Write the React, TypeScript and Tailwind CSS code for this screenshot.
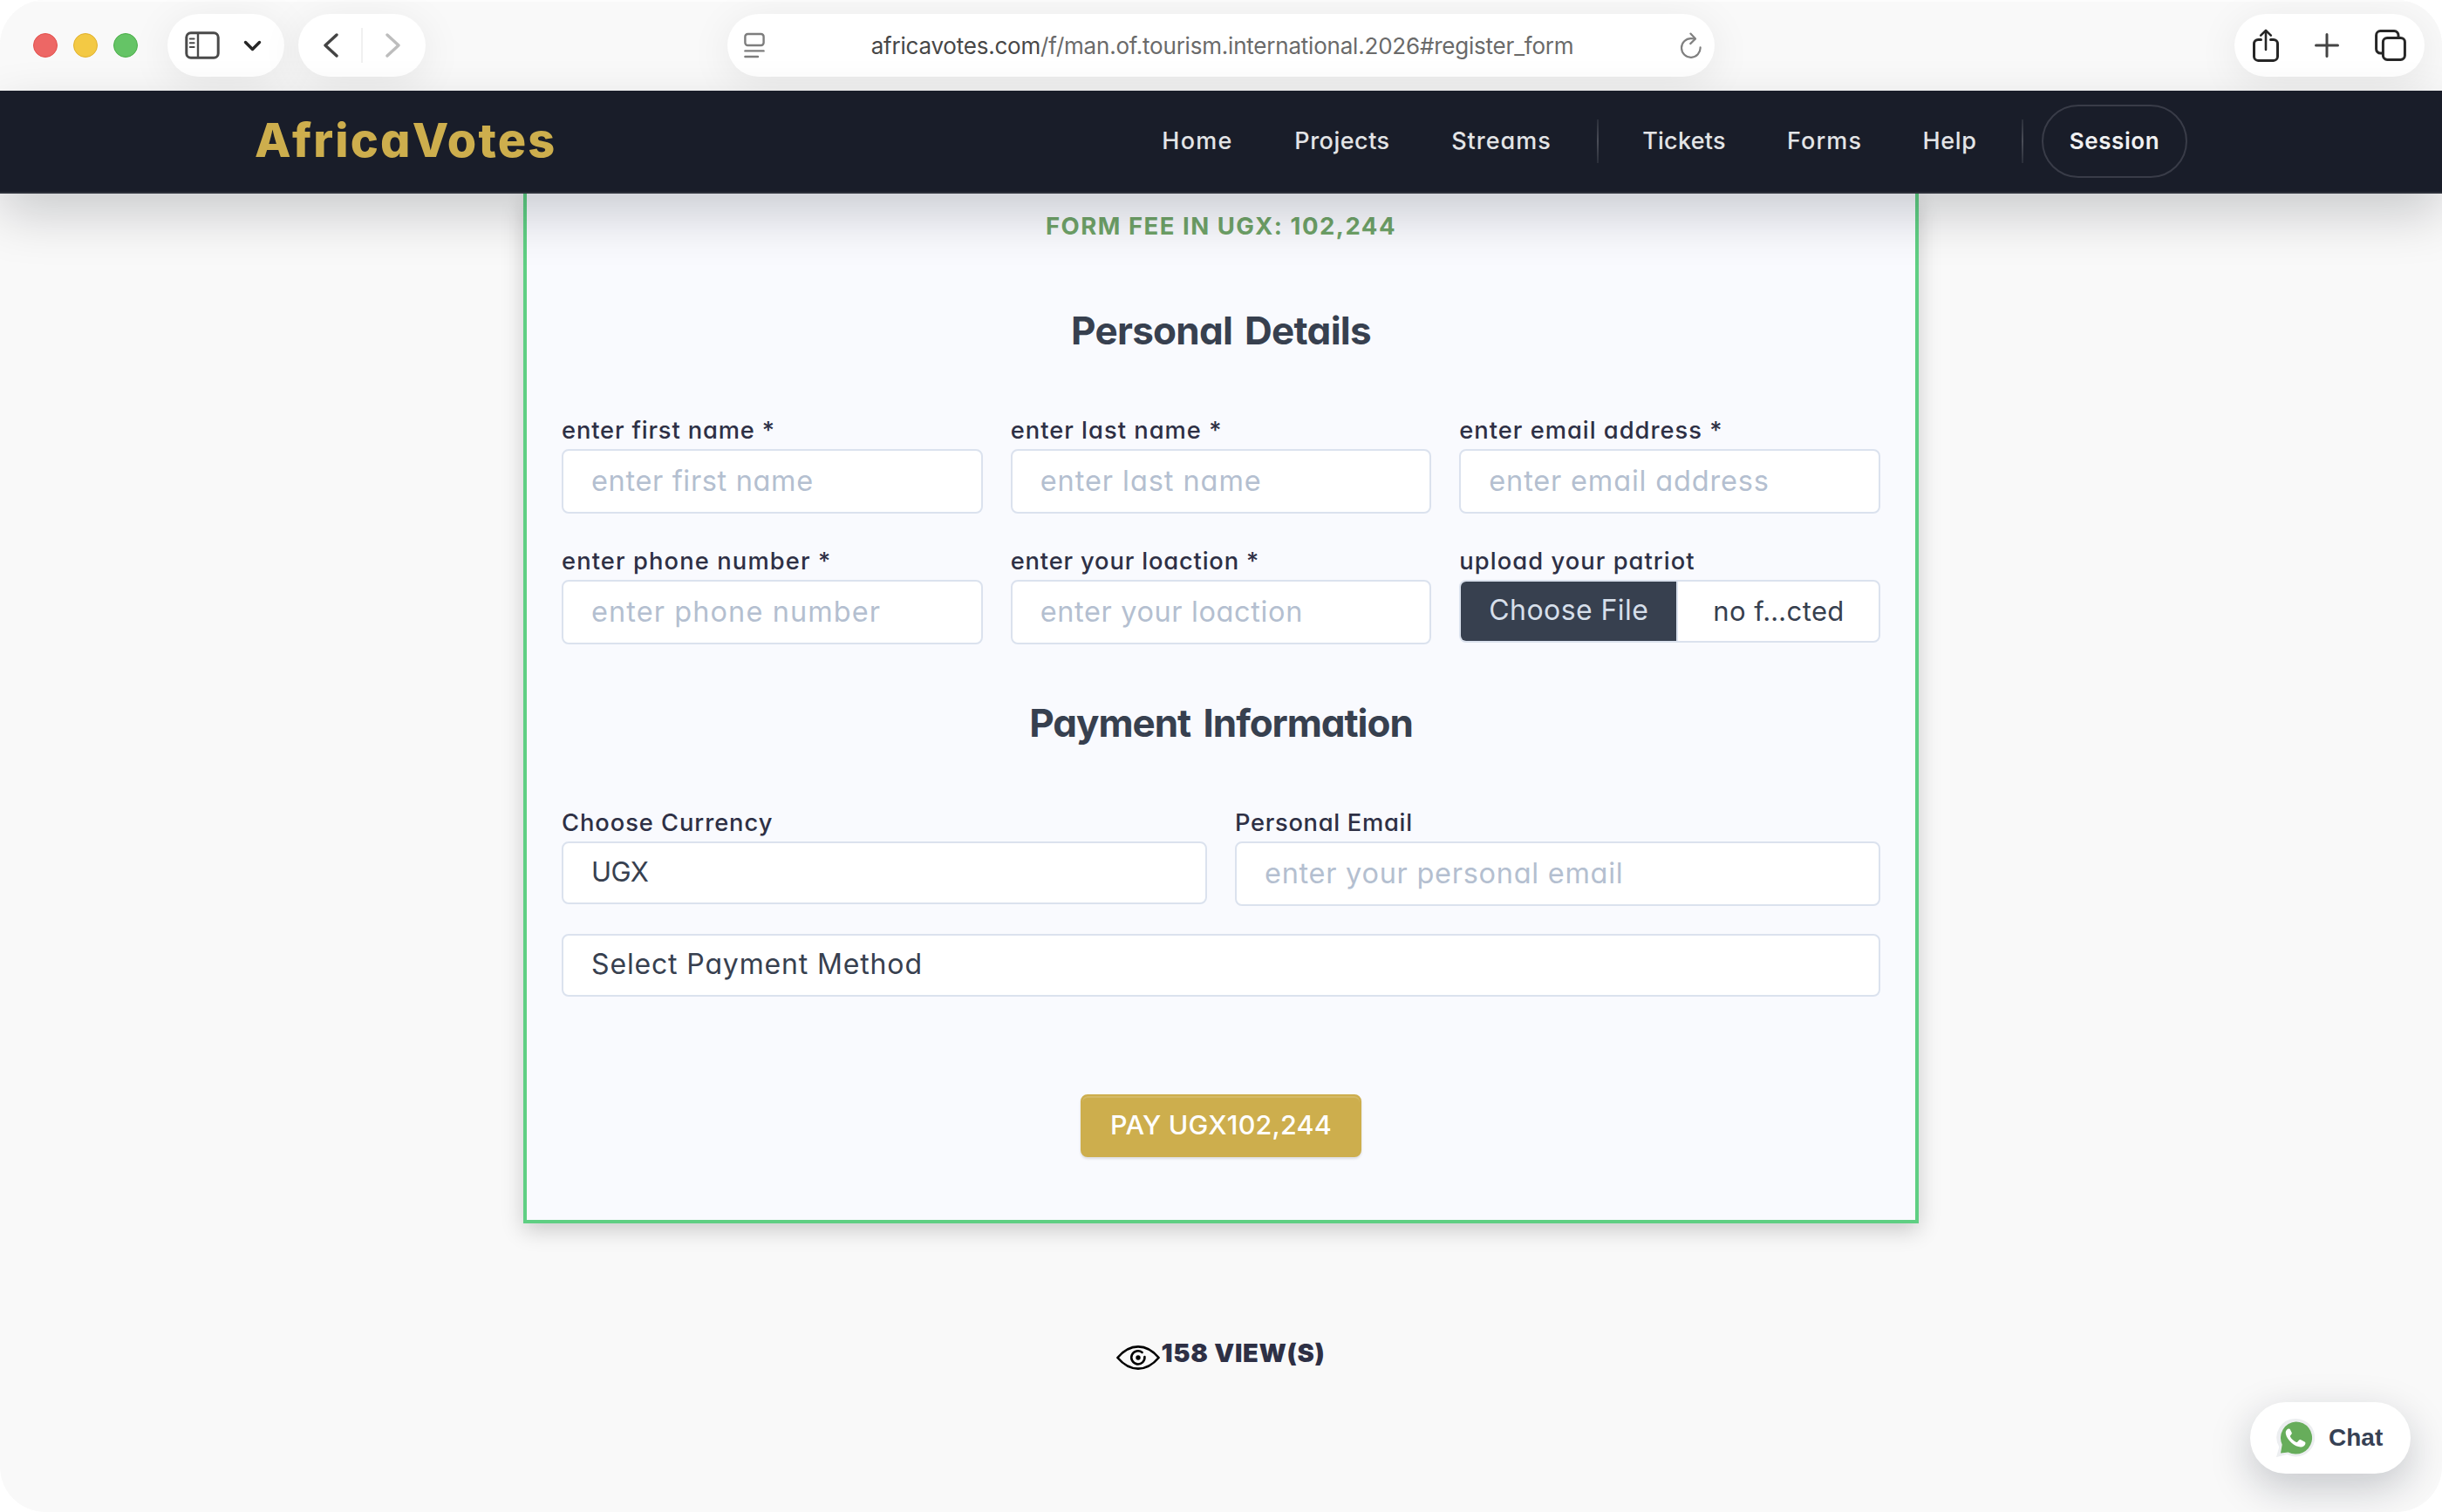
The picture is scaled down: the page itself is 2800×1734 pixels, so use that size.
import type { ReactNode } from "react";

const pill =
  "flex h-[72px] items-center rounded-full bg-white shadow-[0_8px_48px_rgba(0,0,0,0.08)]";

function SidebarIcon() {
  return (
    <svg width="40" height="32" viewBox="0 0 40 32" fill="none" stroke="#4a4a4a" strokeWidth="3">
      <rect x="1.8" y="1.8" width="36.4" height="28.4" rx="5" />
      <path d="M15 2v28" strokeWidth="2.4" />
      <path d="M5.8 8.5h4.8M5.8 13.2h4.8M5.8 17.9h4.8" strokeWidth="2" strokeLinecap="round" />
    </svg>
  );
}

function Chevron({ d, color, w, h }: { d: string; color: string; w: number; h: number }) {
  return (
    <svg width={w} height={h} viewBox={`0 0 ${w} ${h}`} fill="none" stroke={color} strokeWidth="3.4" strokeLinecap="round" strokeLinejoin="round">
      <path d={d} />
    </svg>
  );
}

function ReaderIcon() {
  return (
    <svg width="24" height="30" viewBox="0 0 24 30" fill="none" stroke="#7d7d7d" strokeWidth="2.4" strokeLinecap="round">
      <rect x="1.4" y="2" width="21.2" height="13" rx="3" />
      <path d="M1.4 21.4h21.2M1.4 28h14.6" />
    </svg>
  );
}

function ReloadIcon() {
  return (
    <svg width="26" height="30" viewBox="0 0 26 30" fill="none" stroke="#808080" strokeWidth="2.2" strokeLinecap="round" strokeLinejoin="round">
      <path d="M23.6 17.4A10.8 10.8 0 1 1 13 7.2l4.6.3" />
      <path d="M12.4 1.6l5.6 5.9-5.8 5.6" />
    </svg>
  );
}

function ShareIcon() {
  return (
    <svg width="30" height="38" viewBox="0 0 30 38" fill="none" stroke="#262626" strokeWidth="3" strokeLinecap="round" strokeLinejoin="round">
      <path d="M9.5 12.4H6.2a4.7 4.7 0 0 0-4.7 4.7v14.6a4.7 4.7 0 0 0 4.7 4.7h17.6a4.7 4.7 0 0 0 4.7-4.7V17.1a4.7 4.7 0 0 0-4.7-4.7h-3.3" />
      <path d="M15 24V2M9.2 7.6 15 1.8l5.8 5.8" strokeWidth="2.6" />
    </svg>
  );
}

function PlusIcon() {
  return (
    <svg width="28" height="28" viewBox="0 0 28 28" fill="none" stroke="#444" strokeWidth="3" strokeLinecap="round">
      <path d="M14 1.5v25M1.5 14h25" />
    </svg>
  );
}

function TabsIcon() {
  return (
    <svg width="36" height="36" viewBox="0 0 36 36" fill="none" stroke="#262626" strokeWidth="3">
      <path d="M9 27H6.4a4.8 4.8 0 0 1-4.8-4.8V6.4a4.8 4.8 0 0 1 4.8-4.8h15.8a4.8 4.8 0 0 1 4.8 4.8V9" />
      <rect x="9.4" y="9.4" width="25" height="25" rx="4.8" />
    </svg>
  );
}

function EyeIcon() {
  return (
    <svg width="50" height="28" viewBox="0 0 50 28" fill="none" stroke="#000" strokeWidth="2.6" strokeLinecap="round" strokeLinejoin="round">
      <path d="M1.4 14C8 6.2 16.2 1.4 25 1.4S42 6.2 48.6 14C42 21.8 33.8 26.6 25 26.6S8 21.8 1.4 14Z" />
      <path d="M29.6 7.9A7.6 7.6 0 1 0 32.4 13" />
      <circle cx="25" cy="14" r="2.7" fill="#000" stroke="none" />
    </svg>
  );
}

function WhatsAppIcon() {
  return (
    <svg width="44" height="44" viewBox="0 0 44 44">
      <path d="M22.5 0A21.5 21.5 0 0 1 22.5 43.4c-3.6 0-6.9-.8-9.9-2.3L0 44l3.3-11.600A21.600 21.600 0 0 1 22.500 0Z" fill="#eceef0" />
      <path d="M22.500 3.400a18.600 18.600 0 1 1-8.800 35L5 39.400l1.700-9.600A18.600 18.600 0 0 1 22.500 3.400Z" fill="#67ad5b" />
      <path d="M14.900 11.700c-.9-.3-2 .1-2.900 1.100-1.100 1.200-1.500 2.700-1.100 4.700.7 3.500 3.200 7.200 6.600 10.300 3.600 3.200 7.600 4.800 10.900 4.600 2.200-.1 4.200-1.500 4.800-3.200.4-1.200.3-2.100-.3-2.500l-5.100-2.600c-.7-.3-1.200-.2-1.700.4l-1.700 2.100c-.4.5-.9.500-1.500.3-3-1.300-5.300-3.500-6.800-6.200-.3-.6-.2-1 .1-1.400l1.400-1.800c.3-.4.3-.9.100-1.400l-2-4.200c-.2-.3-.4-.2-.8-.2Z" fill="#fff" />
    </svg>
  );
}

function Toolbar() {
  return (
    <div className="flex h-[104px] items-center bg-[#f9f9f9] pl-[38px] pr-5 shadow-[inset_0_2px_0_#fdfdfd]">
      <div className="flex gap-[18px]">
        <span className="size-7 rounded-full border border-[#e2504c] bg-[#ed6765]" />
        <span className="size-7 rounded-full border border-[#e0b02c] bg-[#f3c944]" />
        <span className="size-7 rounded-full border border-[#4bae49] bg-[#65c466]" />
      </div>
      <div className={`${pill} ml-[34px] w-[134px] pl-5`}>
        <SidebarIcon />
        <span className="ml-[27px]">
          <Chevron d="M2.500 2.500 10.500 10.500 18.500 2.500" color="#262626" w={21} h={13} />
        </span>
      </div>
      <div className={`${pill} ml-4 w-[146px] justify-between px-[28px]`}>
        <Chevron d="M16 2 3 14 16 26" color="#444" w={18} h={28} />
        <span className="h-10 w-0.5 bg-[#f0f0f0]" />
        <Chevron d="M2 2 15 14 2 26" color="#bdbdbd" w={18} h={28} />
      </div>
      <div className={`${pill} ml-[346px] w-[1132px] justify-between pl-[19px] pr-[14px]`}>
        <ReaderIcon />
        <p className="font-['Inter',sans-serif] text-[26px] tracking-[-0.210px] text-[#6a6a6a]">
          <span className="text-[#474747]">africavotes.com</span>/f/man.of.tourism.international.2026#register_form
        </p>
        <ReloadIcon />
      </div>
      <div className={`${pill} ml-auto w-[218px] justify-between px-[21px]`}>
        <ShareIcon />
        <PlusIcon />
        <TabsIcon />
      </div>
    </div>
  );
}

function NavDivider() {
  return <span className="ml-[17px] h-[50px] w-0.5 bg-linear-to-b from-[#2b2f3a] via-[#4a4d57] to-[#2b2f3a]" />;
}

function Navbar() {
  return (
    <header className="relative z-10 flex h-[118px] items-center justify-between border-b-2 border-[#2c303a] bg-[#191d29] px-[292px] shadow-[0_24px_60px_rgba(5,8,20,0.19)]">
      <h1 className="pb-[3px] text-[54px] font-extrabold tracking-[2.150px] text-[#cdae4d]">AfricaVotes</h1>
      <nav className="flex items-center text-[27px] font-medium text-[#e3e4e6]">
        <a className="w-[152px] text-center tracking-[1.300px]">Home</a>
        <a className="w-[180px] text-center tracking-[0.500px]">Projects</a>
        <a className="w-[185px] text-center tracking-[1.000px]">Streams</a>
        <NavDivider />
        <a className="ml-[15px] w-[166px] text-center tracking-[0.250px]">Tickets</a>
        <a className="w-[156px] text-center tracking-[1.100px]">Forms</a>
        <a className="w-[131px] text-center tracking-[0.600px]">Help</a>
        <NavDivider />
        <a className="ml-[21px] flex h-[84px] w-[167px] items-center justify-center rounded-full border-2 border-[#393c48] pb-px text-[26px] font-semibold tracking-[0.600px] text-[#f1f1f2]">
          Session
        </a>
      </nav>
    </header>
  );
}

const box = "flex items-center rounded-lg border-2 border-[#dbe2ee] bg-white pl-8 text-[#37404f]";

function Label({ children, track }: { children: ReactNode; track: string }) {
  return <label className={`block h-[42px] text-[27.300px] font-medium leading-[42px] text-[#2e3045] ${track}`}>{children}</label>;
}

function Field({ label, labelTrack, hint, hintTrack }: { label: string; labelTrack: string; hint: string; hintTrack: string }) {
  return (
    <div>
      <Label track={labelTrack}>{label}</Label>
      <div className={`${box} h-[74px] text-[32.500px]`}>
        <span className={`text-[#b4bfd0] ${hintTrack}`}>{hint}</span>
      </div>
    </div>
  );
}

function RegisterForm() {
  return (
    <form className="mx-auto w-[1600px] border-4 border-t-0 border-[#5fcf83] bg-[#f9fafe] px-10 pb-[72px] pt-[17px] shadow-[0_8px_24px_rgba(0,0,0,0.19)]">
      <p className="h-10 text-center text-[27.500px] font-bold leading-10 tracking-[1.500px] text-[#6fa368]">
        FORM FEE IN UGX: 102,244
      </p>
      <h2 className="mt-[70px] h-[60px] text-center text-[44px] font-bold leading-[60px] tracking-[-0.700px] text-[#37404f] [word-spacing:4px]">
        Personal Details
      </h2>
      <div className="mt-16 grid grid-cols-3 gap-x-8 gap-y-[34px]">
        <Field label="enter first name *" labelTrack="tracking-[0.850px]" hint="enter first name" hintTrack="tracking-[0.650px]" />
        <Field label="enter last name *" labelTrack="tracking-[1.020px]" hint="enter last name" hintTrack="tracking-[0.940px]" />
        <Field label="enter email address *" labelTrack="tracking-[1.000px]" hint="enter email address" hintTrack="tracking-[0.830px]" />
        <Field label="enter phone number *" labelTrack="tracking-[1.120px]" hint="enter phone number" hintTrack="tracking-[1.080px]" />
        <Field label="enter your loaction *" labelTrack="tracking-[0.840px]" hint="enter your loaction" hintTrack="tracking-[0.620px]" />
        <div>
          <Label track="tracking-[1.060px]">upload your patriot</Label>
          <div className="flex h-[72px] overflow-hidden rounded-lg border-2 border-[#dbe2ee] bg-white text-[31px] text-[#37404f]">
            <span className="flex w-[249px] items-center border-r-2 border-[#dbe2ee] bg-[#37404f] bg-clip-padding pb-0.5 pl-8 text-[32px] tracking-[0.420px] text-[#d6dfea]">
              Choose File
            </span>
            <span className="flex items-center pl-[40px] tracking-[0.410px]">no f…cted</span>
          </div>
        </div>
      </div>
      <h2 className="mt-[60px] h-[60px] text-center text-[44px] font-bold leading-[60px] tracking-[-1.050px] text-[#37404f] [word-spacing:5px]">
        Payment Information
      </h2>
      <div className="mt-16 grid grid-cols-2 gap-x-8">
        <div>
          <Label track="tracking-[0.940px]">Choose Currency</Label>
          <div className={`${box} h-[72px] pb-0.5 text-[31px] tracking-[-0.590px]`}>UGX</div>
        </div>
        <Field label="Personal Email" labelTrack="tracking-[0.700px]" hint="enter your personal email" hintTrack="tracking-[0.720px]" />
      </div>
      <div className={`${box} mt-8 h-[72px] pb-0.5 text-[32px] tracking-[0.850px]`}>Select Payment Method</div>
      <button
        type="button"
        className="mx-auto mt-28 flex h-[72px] w-[322px] items-center justify-center rounded-lg border-2 border-[#cdae4d] bg-[#cdae4d] pb-[3px] text-[30.500px] font-medium tracking-[0.200px] text-white shadow-[inset_0_2px_0_rgba(255,255,255,0.15),0_2px_3px_rgba(0,0,0,0.12)]"
      >
        PAY UGX102,244
      </button>
    </form>
  );
}

export default function App() {
  return (
    <div className="h-[1734px] w-[2800px] bg-white">
      <div className="relative flex h-full flex-col overflow-hidden rounded-[52px] bg-[#f9f9f9] font-['Inter',sans-serif]">
        <Toolbar />
        <div className="flex flex-1 flex-col [font-feature-settings:'cv11']">
          <Navbar />
          <main>
            <RegisterForm />
            <div className="mt-[129px] flex h-10 items-center justify-center">
              <span className="pt-[9px]"><EyeIcon /></span>
              <strong className="ml-px text-[29px] font-black tracking-[0.700px] text-[#2e3045]">158 VIEW(S)</strong>
            </div>
          </main>
        </div>
        <button
          type="button"
          className="absolute bottom-[44px] right-9 flex h-[82px] w-[184px] items-center rounded-full bg-white pl-[30px] font-['Liberation_Sans',sans-serif] text-[28px] font-bold text-[#364154] shadow-[0_16px_48px_rgba(15,23,42,0.22)]"
        >
          <WhatsAppIcon />
          <span className="ml-4">Chat</span>
        </button>
      </div>
    </div>
  );
}
